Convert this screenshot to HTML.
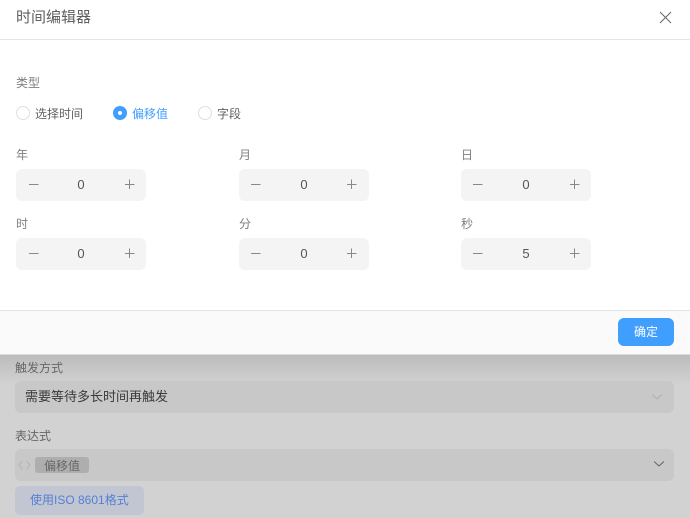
<!DOCTYPE html>
<html lang="zh">
<head>
<meta charset="utf-8">
<style>
html,body{margin:0;padding:0;width:690px;height:518px;overflow:hidden;background:#d2d2d2}
body{position:relative;font-family:"Liberation Sans","Noto Sans CJK SC",sans-serif;}
.t{position:absolute;white-space:nowrap;line-height:20px}
.b{position:absolute}
.num{position:absolute;width:130px;height:32px;background:#f4f4f5;border-radius:6px}
.num .v{position:absolute;left:0;width:130px;text-align:center;top:6px;line-height:20px;font-size:13px;color:#555}
.num svg{position:absolute;top:8px;width:14px;height:14px}
.lb{font-size:12px;color:#808080}
</style>
</head>
<body>
<!-- background -->
<div class="b" style="left:0;top:355px;width:690px;height:30px;background:linear-gradient(#bcbcbc,#d2d2d2)"></div>
<div class="t" style="left:15px;top:358px;font-size:12px;color:#666">触发方式</div>
<div class="b" style="left:15px;top:381px;width:659px;height:32px;background:#c8c8c8;border-radius:6px"></div>
<div class="t" style="left:25px;top:387px;font-size:13px;color:#3a3a3a">需要等待多长时间再触发</div>
<svg class="b" style="left:652px;top:394px" width="10" height="6" viewBox="0 0 10 6"><path d="M0 .5L5 5L10 .5" fill="none" stroke="#adadad" stroke-width="1"/></svg>
<div class="t" style="left:15px;top:426px;font-size:12px;color:#666">表达式</div>
<div class="b" style="left:15px;top:449px;width:659px;height:32px;background:#c8c8c8;border-radius:6px"></div>
<svg class="b" style="left:18px;top:460px" width="13" height="10" viewBox="0 0 13 10"><path d="M4.5 1L1 5L4.5 9M8.5 1L12 5L8.5 9" fill="none" stroke="#b4b4b4" stroke-width="1"/></svg>
<div class="b" style="left:35px;top:457px;width:54px;height:16px;background:#aeaeae;border-radius:3px"></div>
<div class="t" style="left:44px;top:456px;font-size:12px;color:#666">偏移值</div>
<svg class="b" style="left:654px;top:461px" width="10" height="6" viewBox="0 0 10 6"><path d="M0 .5L5 5L10 .5" fill="none" stroke="#606060" stroke-width="1"/></svg>
<div class="b" style="left:15px;top:486px;width:129px;height:29px;background:#c1c6d2;border-radius:5px"></div>
<div class="t" style="left:30px;top:490px;font-size:12px;color:#5580d0">使用ISO 8601格式</div>

<!-- dialog -->
<div class="b" style="left:0;top:0;width:690px;height:355px;background:#fff"></div>
<div class="t" style="left:16px;top:8px;font-size:15px;line-height:19px;color:#606060">时间编辑器</div>
<svg class="b" style="left:659px;top:11px" width="13" height="13" viewBox="0 0 13 13"><path d="M1 1L12 12M12 1L1 12" stroke="#666" stroke-width="1" fill="none"/></svg>
<div class="b" style="left:0;top:39px;width:690px;height:1px;background:#e4e4e4"></div>

<div class="t lb" style="left:16px;top:73px">类型</div>

<div class="b" style="left:16px;top:106px;width:12px;height:12px;border:1px solid #dcdfe6;border-radius:50%;background:#fff"></div>
<div class="t" style="left:35px;top:104px;font-size:12px;color:#606266">选择时间</div>
<div class="b" style="left:113px;top:106px;width:14px;height:14px;border-radius:50%;background:#409eff"></div>
<div class="b" style="left:118px;top:111px;width:4px;height:4px;border-radius:50%;background:#fff"></div>
<div class="t" style="left:132px;top:104px;font-size:12px;color:#409eff">偏移值</div>
<div class="b" style="left:198px;top:106px;width:12px;height:12px;border:1px solid #dcdfe6;border-radius:50%;background:#fff"></div>
<div class="t" style="left:217px;top:104px;font-size:12px;color:#606266">字段</div>

<div class="t lb" style="left:16px;top:145px">年</div>
<div class="t lb" style="left:239px;top:145px">月</div>
<div class="t lb" style="left:461px;top:145px">日</div>
<div class="t lb" style="left:16px;top:214px">时</div>
<div class="t lb" style="left:239px;top:214px">分</div>
<div class="t lb" style="left:461px;top:214px">秒</div>

<div class="num" style="left:16px;top:169px"><svg style="left:11px" viewBox="0 0 14 14"><path d="M2 7.5H11.5" stroke="#888" fill="none"/></svg><div class="v">0</div><svg style="left:106px" viewBox="0 0 14 14"><path d="M3 7.5H12.5M7.5 2.5V12" stroke="#888" fill="none"/></svg></div>
<div class="num" style="left:239px;top:169px"><svg style="left:10px" viewBox="0 0 14 14"><path d="M2 7.5H11.5" stroke="#888" fill="none"/></svg><div class="v">0</div><svg style="left:105px" viewBox="0 0 14 14"><path d="M3 7.5H12.5M7.5 2.5V12" stroke="#888" fill="none"/></svg></div>
<div class="num" style="left:461px;top:169px"><svg style="left:10px" viewBox="0 0 14 14"><path d="M2 7.5H11.5" stroke="#888" fill="none"/></svg><div class="v">0</div><svg style="left:106px" viewBox="0 0 14 14"><path d="M3 7.5H12.5M7.5 2.5V12" stroke="#888" fill="none"/></svg></div>
<div class="num" style="left:16px;top:238px"><svg style="left:11px" viewBox="0 0 14 14"><path d="M2 7.5H11.5" stroke="#888" fill="none"/></svg><div class="v">0</div><svg style="left:106px" viewBox="0 0 14 14"><path d="M3 7.5H12.5M7.5 2.5V12" stroke="#888" fill="none"/></svg></div>
<div class="num" style="left:239px;top:238px"><svg style="left:10px" viewBox="0 0 14 14"><path d="M2 7.5H11.5" stroke="#888" fill="none"/></svg><div class="v">0</div><svg style="left:105px" viewBox="0 0 14 14"><path d="M3 7.5H12.5M7.5 2.5V12" stroke="#888" fill="none"/></svg></div>
<div class="num" style="left:461px;top:238px"><svg style="left:10px" viewBox="0 0 14 14"><path d="M2 7.5H11.5" stroke="#888" fill="none"/></svg><div class="v">5</div><svg style="left:106px" viewBox="0 0 14 14"><path d="M3 7.5H12.5M7.5 2.5V12" stroke="#888" fill="none"/></svg></div>

<!-- footer -->
<div class="b" style="left:0;top:310px;width:690px;height:43px;background:#fafafa;border-top:1px solid #e4e4e4;border-bottom:1px solid #dcdcdc"></div>
<div class="b" style="left:618px;top:318px;width:56px;height:28px;background:#409eff;border-radius:6px"></div>
<div class="t" style="left:618px;top:322px;width:56px;text-align:center;font-size:12px;color:#fff">确定</div>
</body>
</html>
